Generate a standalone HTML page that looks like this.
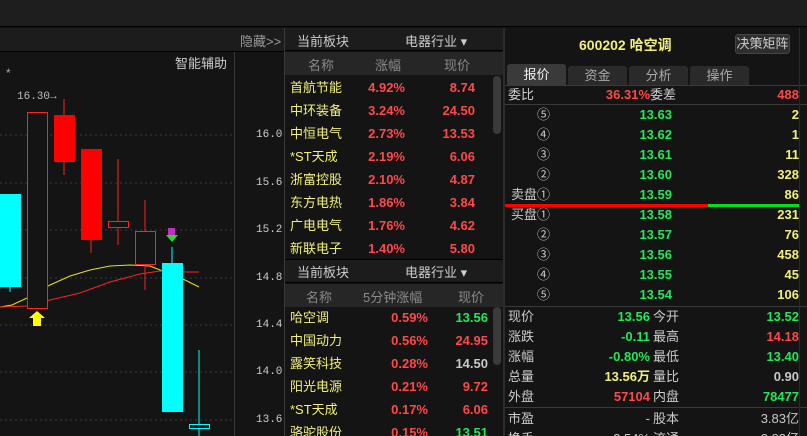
<!DOCTYPE html>
<html><head><meta charset="utf-8"><style>
*{margin:0;padding:0;box-sizing:border-box}
html{width:807px;height:436px;overflow:hidden;background:#141414}
body{width:807px;height:436px;background:#141414;overflow:hidden;position:relative;font-family:"Liberation Sans","Noto Sans CJK SC",sans-serif;font-size:13px;color:#ccc}
.a{position:absolute;white-space:nowrap}
.y{color:#f2f07a}.r{color:#ff4848}.g{color:#20e858}.w{color:#c8c8c8}
</style></head><body>
<div class="a" style="left:0;top:0;width:807px;height:27px;background:#1e1e1e;border-bottom:1px solid #000"></div>
<div class="a" style="left:0;top:28px;width:284px;height:24px;background:#1c1c1c;border-bottom:1px solid #000"></div>
<div class="a" style="left:240px;top:31px;color:#9a9a9a;font-size:13px">隐藏&gt;&gt;</div>
<div class="a" style="left:175px;top:53px;color:#ccc;font-size:13px">智能辅助</div>
<div class="a" style="left:6px;top:66px;color:#aaa;font-size:12px">*</div>
<div class="a" style="left:17px;top:91px;color:#bbb;font-size:11px;font-family:'Liberation Mono',monospace">16.30→</div>
<div class="a" style="left:234px;top:52px;width:1px;height:384px;background:#3a3a3a"></div>
<div class="a" style="left:284px;top:28px;width:1px;height:408px;background:#3a3a3a"></div>
<svg class="a" style="left:0;top:52px" width="234" height="384" viewBox="0 52 234 384">
<g stroke="#3a3a3a" stroke-dasharray="2,3">
<line x1="0" y1="135" x2="234" y2="135"/><line x1="0" y1="183" x2="234" y2="183"/><line x1="0" y1="230" x2="234" y2="230"/><line x1="0" y1="278" x2="234" y2="278"/><line x1="0" y1="325" x2="234" y2="325"/><line x1="0" y1="372" x2="234" y2="372"/><line x1="0" y1="420" x2="234" y2="420"/>
</g>
<polyline fill="none" stroke="#e8e020" stroke-width="1" points="0,307 12,305 27,298 50,285 70,276 90,270 110,266 130,265 150,266 165,272 185,280 199,287"/>
<polyline fill="none" stroke="#ff2020" stroke-width="1" points="0,307 27,306 50,300 80,293 110,282 140,274 160,271 185,272 199,272"/>
<line x1="10" y1="287" x2="10" y2="292" stroke="#00ffff"/>
<rect x="0" y="194" width="21" height="93" fill="#00ffff"/>
<rect x="27.5" y="112.5" width="20" height="196" fill="#141414" stroke="#ff2020"/>
<line x1="64" y1="99" x2="64" y2="175" stroke="#ff2020"/><rect x="54" y="115" width="21" height="47" fill="#ff0000"/>
<line x1="91" y1="240" x2="91" y2="253" stroke="#ff2020"/><rect x="81" y="149" width="21" height="91" fill="#ff0000"/>
<line x1="118" y1="159" x2="118" y2="245" stroke="#ff2020"/><rect x="108.5" y="221.5" width="20" height="6" fill="#141414" stroke="#ff2020"/>
<line x1="145" y1="200" x2="145" y2="290" stroke="#ff2020"/><rect x="135.5" y="231.5" width="20" height="33" fill="#141414" stroke="#ff2020"/>
<line x1="172" y1="247" x2="172" y2="263" stroke="#00ffff"/><rect x="162" y="263" width="21" height="149" fill="#00ffff"/>
<line x1="199" y1="350" x2="199" y2="436" stroke="#00ffff"/><rect x="189.5" y="424.5" width="20" height="4" fill="#141414" stroke="#00ffff"/>
<polygon points="37,311 45,318 41,318 41,326 33,326 33,318 29,318" fill="#ffff00"/>
<rect x="168" y="228" width="7" height="7" fill="#c030c0"/><polygon points="166,235 178,235 172,242" fill="#20e020"/>
</svg>
<div class="a" style="left:256px;top:127px;color:#ccc;font-size:11px;font-family:'Liberation Mono',monospace;line-height:16px">16.0</div>
<div class="a" style="left:256px;top:175px;color:#ccc;font-size:11px;font-family:'Liberation Mono',monospace;line-height:16px">15.6</div>
<div class="a" style="left:256px;top:222px;color:#ccc;font-size:11px;font-family:'Liberation Mono',monospace;line-height:16px">15.2</div>
<div class="a" style="left:256px;top:270px;color:#ccc;font-size:11px;font-family:'Liberation Mono',monospace;line-height:16px">14.8</div>
<div class="a" style="left:256px;top:317px;color:#ccc;font-size:11px;font-family:'Liberation Mono',monospace;line-height:16px">14.4</div>
<div class="a" style="left:256px;top:364px;color:#ccc;font-size:11px;font-family:'Liberation Mono',monospace;line-height:16px">14.0</div>
<div class="a" style="left:256px;top:412px;color:#ccc;font-size:11px;font-family:'Liberation Mono',monospace;line-height:16px">13.6</div>
<div class="a" style="left:285px;top:28px;width:218px;height:23px;background:#1c1c1c;border-bottom:1px solid #000"></div>
<div class="a" style="left:297px;top:31px;color:#ccc">当前板块</div>
<div class="a" style="left:405px;top:31px;color:#ccc">电器行业 ▾</div>
<div class="a" style="left:285px;top:52px;width:218px;height:23px;background:#262626"></div>
<div class="a" style="left:308px;top:55px;color:#8a8a8a">名称</div>
<div class="a" style="left:375px;top:55px;color:#8a8a8a">涨幅</div>
<div class="a" style="left:444px;top:55px;color:#8a8a8a">现价</div>
<div class="a" style="left:493px;top:76px;width:8px;height:58px;background:#3a3a3a;border-radius:4px"></div>
<div class="a" style="left:285px;top:76px;width:205px;font-size:13px;font-weight:bold;line-height:23px">
<div style="display:flex"><span class="y" style="width:77px;padding-left:5px;font-weight:normal">首航节能</span><span class="r" style="width:43px;text-align:right">4.92%</span><span class="r" style="width:70px;text-align:right">8.74</span></div>
<div style="display:flex"><span class="y" style="width:77px;padding-left:5px;font-weight:normal">中环装备</span><span class="r" style="width:43px;text-align:right">3.24%</span><span class="r" style="width:70px;text-align:right">24.50</span></div>
<div style="display:flex"><span class="y" style="width:77px;padding-left:5px;font-weight:normal">中恒电气</span><span class="r" style="width:43px;text-align:right">2.73%</span><span class="r" style="width:70px;text-align:right">13.53</span></div>
<div style="display:flex"><span class="y" style="width:77px;padding-left:5px;font-weight:normal">*ST天成</span><span class="r" style="width:43px;text-align:right">2.19%</span><span class="r" style="width:70px;text-align:right">6.06</span></div>
<div style="display:flex"><span class="y" style="width:77px;padding-left:5px;font-weight:normal">浙富控股</span><span class="r" style="width:43px;text-align:right">2.10%</span><span class="r" style="width:70px;text-align:right">4.87</span></div>
<div style="display:flex"><span class="y" style="width:77px;padding-left:5px;font-weight:normal">东方电热</span><span class="r" style="width:43px;text-align:right">1.86%</span><span class="r" style="width:70px;text-align:right">3.84</span></div>
<div style="display:flex"><span class="y" style="width:77px;padding-left:5px;font-weight:normal">广电电气</span><span class="r" style="width:43px;text-align:right">1.76%</span><span class="r" style="width:70px;text-align:right">4.62</span></div>
<div style="display:flex"><span class="y" style="width:77px;padding-left:5px;font-weight:normal">新联电子</span><span class="r" style="width:43px;text-align:right">1.40%</span><span class="r" style="width:70px;text-align:right">5.80</span></div>
</div>
<div class="a" style="left:285px;top:259px;width:218px;height:24px;background:#1c1c1c;border-top:1px solid #000;border-bottom:1px solid #000"></div>
<div class="a" style="left:297px;top:262px;color:#ccc">当前板块</div>
<div class="a" style="left:405px;top:262px;color:#ccc">电器行业 ▾</div>
<div class="a" style="left:285px;top:284px;width:218px;height:23px;background:#262626"></div>
<div class="a" style="left:306px;top:287px;color:#8a8a8a">名称</div>
<div class="a" style="left:363px;top:287px;color:#8a8a8a">5分钟涨幅</div>
<div class="a" style="left:458px;top:287px;color:#8a8a8a">现价</div>
<div class="a" style="left:493px;top:307px;width:8px;height:58px;background:#3a3a3a;border-radius:4px"></div>
<div class="a" style="left:285px;top:306px;width:205px;font-size:13px;font-weight:bold;line-height:23px">
<div style="display:flex"><span class="y" style="width:77px;padding-left:5px;font-weight:normal">哈空调</span><span class="r" style="width:66px;text-align:right">0.59%</span><span class="g" style="width:60px;text-align:right">13.56</span></div>
<div style="display:flex"><span class="y" style="width:77px;padding-left:5px;font-weight:normal">中国动力</span><span class="r" style="width:66px;text-align:right">0.56%</span><span class="r" style="width:60px;text-align:right">24.95</span></div>
<div style="display:flex"><span class="y" style="width:77px;padding-left:5px;font-weight:normal">露笑科技</span><span class="r" style="width:66px;text-align:right">0.28%</span><span class="w" style="width:60px;text-align:right">14.50</span></div>
<div style="display:flex"><span class="y" style="width:77px;padding-left:5px;font-weight:normal">阳光电源</span><span class="r" style="width:66px;text-align:right">0.21%</span><span class="r" style="width:60px;text-align:right">9.72</span></div>
<div style="display:flex"><span class="y" style="width:77px;padding-left:5px;font-weight:normal">*ST天成</span><span class="r" style="width:66px;text-align:right">0.17%</span><span class="r" style="width:60px;text-align:right">6.06</span></div>
<div style="display:flex"><span class="y" style="width:77px;padding-left:5px;font-weight:normal">骆驼股份</span><span class="r" style="width:66px;text-align:right">0.15%</span><span class="g" style="width:60px;text-align:right">13.51</span></div>
</div>
<div class="a" style="left:503px;top:28px;width:2px;height:408px;background:#2c2c2c"></div>
<div class="a" style="left:579px;top:35px;color:#f2f07a;font-weight:bold;font-size:14px">600202 哈空调</div>
<div class="a" style="left:735px;top:34px;width:55px;height:20px;background:#2e2e2e;border:1px solid #444;border-radius:3px;color:#ccc;font-size:13px;line-height:18px;text-align:center">决策矩阵</div>
<div class="a" style="left:507px;top:64px;width:59px;height:21px;background:#3a3a3a;border-radius:3px 3px 0 0;color:#eee;text-align:center;line-height:21px">报价</div>
<div class="a" style="left:568px;top:66px;width:59px;height:19px;background:#2a2a2a;border-radius:3px 3px 0 0;color:#aaa;text-align:center;line-height:19px">资金</div>
<div class="a" style="left:629px;top:66px;width:59px;height:19px;background:#2a2a2a;border-radius:3px 3px 0 0;color:#aaa;text-align:center;line-height:19px">分析</div>
<div class="a" style="left:690px;top:66px;width:59px;height:19px;background:#2a2a2a;border-radius:3px 3px 0 0;color:#aaa;text-align:center;line-height:19px">操作</div>
<div class="a" style="left:505px;top:85px;width:302px;height:1px;background:#3a3a3a"></div>
<div class="a" style="left:505px;top:104px;width:302px;height:1px;background:#3a3a3a"></div>
<div class="a" style="left:505px;top:306px;width:302px;height:1px;background:#3a3a3a"></div>
<div class="a" style="left:505px;top:407px;width:302px;height:1px;background:#3a3a3a"></div>
<div class="a" style="left:505px;top:204px;width:203px;height:3px;background:#ff0000"></div>
<div class="a" style="left:708px;top:204px;width:91px;height:3px;background:#00e020"></div>
<div class="a" style="left:799px;top:28px;width:1px;height:408px;background:#2a2a2a"></div>
<div class="a" style="left:505px;top:85px;width:294px;font-size:13px;line-height:20px">
<div style="display:flex;height:19px"><span style="width:45px;padding-left:3px">委比</span><span class="r" style="width:100px;text-align:right;font-weight:bold">36.31%</span><span style="width:60px">委差</span><span class="r" style="width:89px;text-align:right;font-weight:bold">488</span></div>
<div style="height:1px"></div>
<div style="display:flex"><span style="width:45px;padding-left:3px;text-align:right">⑤</span><span class="g" style="width:122px;text-align:right;font-weight:bold">13.63</span><span class="y" style="width:127px;text-align:right;font-weight:bold">2</span></div>
<div style="display:flex"><span style="width:45px;padding-left:3px;text-align:right">④</span><span class="g" style="width:122px;text-align:right;font-weight:bold">13.62</span><span class="y" style="width:127px;text-align:right;font-weight:bold">1</span></div>
<div style="display:flex"><span style="width:45px;padding-left:3px;text-align:right">③</span><span class="g" style="width:122px;text-align:right;font-weight:bold">13.61</span><span class="y" style="width:127px;text-align:right;font-weight:bold">11</span></div>
<div style="display:flex"><span style="width:45px;padding-left:3px;text-align:right">②</span><span class="g" style="width:122px;text-align:right;font-weight:bold">13.60</span><span class="y" style="width:127px;text-align:right;font-weight:bold">328</span></div>
<div style="display:flex"><span style="width:45px;padding-left:3px;text-align:right">卖盘①</span><span class="g" style="width:122px;text-align:right;font-weight:bold">13.59</span><span class="y" style="width:127px;text-align:right;font-weight:bold">86</span></div>
<div style="display:flex"><span style="width:45px;padding-left:3px;text-align:right">买盘①</span><span class="g" style="width:122px;text-align:right;font-weight:bold">13.58</span><span class="y" style="width:127px;text-align:right;font-weight:bold">231</span></div>
<div style="display:flex"><span style="width:45px;padding-left:3px;text-align:right">②</span><span class="g" style="width:122px;text-align:right;font-weight:bold">13.57</span><span class="y" style="width:127px;text-align:right;font-weight:bold">76</span></div>
<div style="display:flex"><span style="width:45px;padding-left:3px;text-align:right">③</span><span class="g" style="width:122px;text-align:right;font-weight:bold">13.56</span><span class="y" style="width:127px;text-align:right;font-weight:bold">458</span></div>
<div style="display:flex"><span style="width:45px;padding-left:3px;text-align:right">④</span><span class="g" style="width:122px;text-align:right;font-weight:bold">13.55</span><span class="y" style="width:127px;text-align:right;font-weight:bold">45</span></div>
<div style="display:flex"><span style="width:45px;padding-left:3px;text-align:right">⑤</span><span class="g" style="width:122px;text-align:right;font-weight:bold">13.54</span><span class="y" style="width:127px;text-align:right;font-weight:bold">106</span></div>
<div style="height:2px"></div>
<div style="display:flex"><span style="width:45px;padding-left:3px">现价</span><span class="g" style="width:100px;text-align:right;font-weight:bold">13.56</span><span style="width:60px;padding-left:3px">今开</span><span class="g" style="width:89px;text-align:right;font-weight:bold">13.52</span></div>
<div style="display:flex"><span style="width:45px;padding-left:3px">涨跌</span><span class="g" style="width:100px;text-align:right;font-weight:bold">-0.11</span><span style="width:60px;padding-left:3px">最高</span><span class="r" style="width:89px;text-align:right;font-weight:bold">14.18</span></div>
<div style="display:flex"><span style="width:45px;padding-left:3px">涨幅</span><span class="g" style="width:100px;text-align:right;font-weight:bold">-0.80%</span><span style="width:60px;padding-left:3px">最低</span><span class="g" style="width:89px;text-align:right;font-weight:bold">13.40</span></div>
<div style="display:flex"><span style="width:45px;padding-left:3px">总量</span><span class="y" style="width:100px;text-align:right;font-weight:bold">13.56万</span><span style="width:60px;padding-left:3px">量比</span><span class="w" style="width:89px;text-align:right;font-weight:bold">0.90</span></div>
<div style="display:flex"><span style="width:45px;padding-left:3px">外盘</span><span class="r" style="width:100px;text-align:right;font-weight:bold">57104</span><span style="width:60px;padding-left:3px">内盘</span><span class="g" style="width:89px;text-align:right;font-weight:bold">78477</span></div>
<div style="height:2px"></div>
<div style="display:flex"><span style="width:45px;padding-left:3px">市盈</span><span class="w" style="width:100px;text-align:right">-</span><span style="width:60px;padding-left:3px">股本</span><span class="w" style="width:89px;text-align:right">3.83亿</span></div>
<div style="display:flex"><span style="width:45px;padding-left:3px">换手</span><span class="w" style="width:100px;text-align:right">2.54%</span><span style="width:60px;padding-left:3px">流通</span><span class="w" style="width:89px;text-align:right">3.83亿</span></div>
</div>
</body></html>
